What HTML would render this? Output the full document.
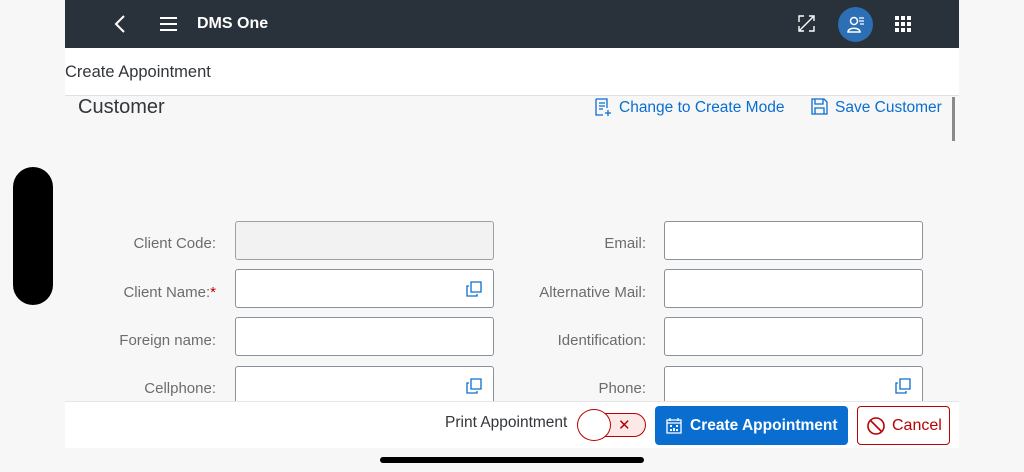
<!DOCTYPE html>
<html><head><style>
*{box-sizing:border-box;margin:0;padding:0}
body{width:1024px;height:472px;background:#f7f7f7;font-family:"Liberation Sans",sans-serif;position:relative;overflow:hidden}
.a{position:absolute}
.hdr{left:65px;top:0;width:894px;height:48px;background:#29313a}
.lbl{font-size:15px;color:#6a6d70;text-align:right;width:200px}
.inp{width:259px;height:39px;border:1px solid #89919a;border-radius:3px;background:#fff}
.cp{position:absolute;right:11px;top:11px;width:16px;height:16px}
.blue{color:#0a6ed1;font-size:15.5px}
</style></head><body>
<div class="a hdr"></div>
<svg class="a" style="left:112px;top:14px" width="16" height="20"><path d="M12 2 L4 10 L12 18" stroke="#fff" stroke-width="2" fill="none"/></svg>
<svg class="a" style="left:159px;top:16px" width="20" height="16"><path d="M1 2H18M1 8H18M1 14H18" stroke="#fff" stroke-width="2"/></svg>
<div class="a" style="left:197px;top:15px;color:#fff;font-weight:bold;font-size:16px">DMS One</div>
<svg class="a" style="left:797px;top:14px" width="20" height="20"><path d="M2 8V2H7M12 2H17V7M2 12V17H7M17 12V17H12M9 10L16 3M3 16L10 9" stroke="#fff" stroke-width="1.4" fill="none"/></svg>
<div class="a" style="left:838px;top:7px;width:35px;height:35px;border-radius:50%;background:#2c6fb5"></div>
<svg class="a" style="left:846px;top:15px" width="20" height="20"><circle cx="8" cy="6" r="3.5" stroke="#fff" stroke-width="1.5" fill="none"/><path d="M2 17C2 12 14 12 14 17Z" stroke="#fff" stroke-width="1.5" fill="none"/><path d="M13 3H18M13 6H18M14 9H18" stroke="#fff" stroke-width="1.2"/></svg>
<svg class="a" style="left:895px;top:16px" width="18" height="18"><g fill="#fff"><rect x="0" y="0" width="4" height="4"/><rect x="6" y="0" width="4" height="4"/><rect x="12" y="0" width="4" height="4"/><rect x="0" y="6" width="4" height="4"/><rect x="6" y="6" width="4" height="4"/><rect x="12" y="6" width="4" height="4"/><rect x="0" y="12" width="4" height="4"/><rect x="6" y="12" width="4" height="4"/><rect x="12" y="12" width="4" height="4"/></g></svg>
<div class="a" style="left:65px;top:48px;width:894px;height:48px;background:#fff;border-bottom:1px solid #e0e0e0"></div>
<div class="a" style="left:65px;top:63px;font-size:16.5px;color:#32363a">Create Appointment</div>
<div class="a" style="left:78px;top:96px;font-size:20px;color:#32363a">Customer</div>
<svg class="a" style="left:594px;top:98px" width="18" height="20"><path d="M2 1H13V10M2 1V17H9M5 5H11M5 8H11M5 11H9M14 12V18M11 15H17" stroke="#0a6ed1" stroke-width="1.3" fill="none"/></svg>
<div class="a blue" style="left:619px;top:99px">Change to Create Mode</div>
<svg class="a" style="left:811px;top:98px" width="18" height="18"><path d="M1 1H13L16 4V16H1Z M4 1V6H12V1M4 16V10H13V16" stroke="#0a6ed1" stroke-width="1.3" fill="none"/></svg>
<div class="a blue" style="left:835px;top:99px">Save Customer</div>
<div class="a" style="left:952px;top:97px;width:3px;height:44px;background:#8a8a8a"></div>
<div class="a" style="left:13px;top:167px;width:40px;height:138px;background:#000;border-radius:20px"></div>

<div class="a lbl" style="left:16px;top:235px">Client Code:</div>
<div class="a inp" style="left:235px;top:221px;background:#f2f2f2;border-color:#a0a0a0"></div>
<div class="a lbl" style="left:16px;top:284px">Client Name:<span style="color:#bb0000">*</span></div>
<div class="a inp" style="left:235px;top:269px"><svg class="cp" viewBox="0 0 16 16"><path d="M5 1H15V11H5Z M3 5H1V15H11V13" stroke="#0a6ed1" stroke-width="1.3" fill="none"/></svg></div>
<div class="a lbl" style="left:16px;top:332px">Foreign name:</div>
<div class="a inp" style="left:235px;top:317px"></div>
<div class="a lbl" style="left:16px;top:380px">Cellphone:</div>
<div class="a inp" style="left:235px;top:366px"><svg class="cp" viewBox="0 0 16 16"><path d="M5 1H15V11H5Z M3 5H1V15H11V13" stroke="#0a6ed1" stroke-width="1.3" fill="none"/></svg></div>

<div class="a lbl" style="left:446px;top:235px">Email:</div>
<div class="a inp" style="left:664px;top:221px"></div>
<div class="a lbl" style="left:446px;top:284px">Alternative Mail:</div>
<div class="a inp" style="left:664px;top:269px"></div>
<div class="a lbl" style="left:446px;top:332px">Identification:</div>
<div class="a inp" style="left:664px;top:317px"></div>
<div class="a lbl" style="left:446px;top:380px">Phone:</div>
<div class="a inp" style="left:664px;top:366px"><svg class="cp" viewBox="0 0 16 16"><path d="M5 1H15V11H5Z M3 5H1V15H11V13" stroke="#0a6ed1" stroke-width="1.3" fill="none"/></svg></div>

<div class="a" style="left:65px;top:401px;width:894px;height:47px;background:#fff;border-top:1px solid #e5e5e5"></div>
<div class="a" style="left:445px;top:414px;font-size:15.5px;color:#32363a">Print Appointment</div>
<div class="a" style="left:580px;top:413px;width:66px;height:24px;border:1.5px solid #bb0000;border-radius:12px;background:#fde8e8"></div>
<div class="a" style="left:577px;top:409px;width:34px;height:32px;border:1.5px solid #bb0000;border-radius:50%;background:#fff"></div>
<div class="a" style="left:618px;top:416px;color:#bb0000;font-size:15px">✕</div>
<div class="a" style="left:655px;top:406px;width:193px;height:39px;background:#0a6ed1;border-radius:4px"></div>
<svg class="a" style="left:666px;top:417px" width="17" height="17"><path d="M1 3H15V16H1Z M1 6H15 M4 1V4 M12 1V4" stroke="#fff" stroke-width="1.3" fill="none"/><g fill="#fff"><rect x="4" y="8" width="2" height="2"/><rect x="10" y="8" width="2" height="2"/><rect x="4" y="12" width="2" height="2"/><rect x="7" y="11" width="2" height="3"/><rect x="10" y="12" width="2" height="2"/></g></svg>
<div class="a" style="left:690px;top:417px;color:#fff;font-weight:bold;font-size:15.5px">Create Appointment</div>
<div class="a" style="left:857px;top:406px;width:93px;height:39px;border:1px solid #bb0000;border-radius:4px;background:#fff"></div>
<svg class="a" style="left:866px;top:416px" width="20" height="20"><circle cx="10" cy="10" r="8" stroke="#bb0000" stroke-width="1.6" fill="none"/><path d="M4.5 4.5L15.5 15.5" stroke="#bb0000" stroke-width="1.6"/></svg>
<div class="a" style="left:892px;top:417px;color:#bb0000;font-size:16px">Cancel</div>
<div class="a" style="left:380px;top:457px;width:264px;height:6px;border-radius:3px;background:#000"></div>
</body></html>
